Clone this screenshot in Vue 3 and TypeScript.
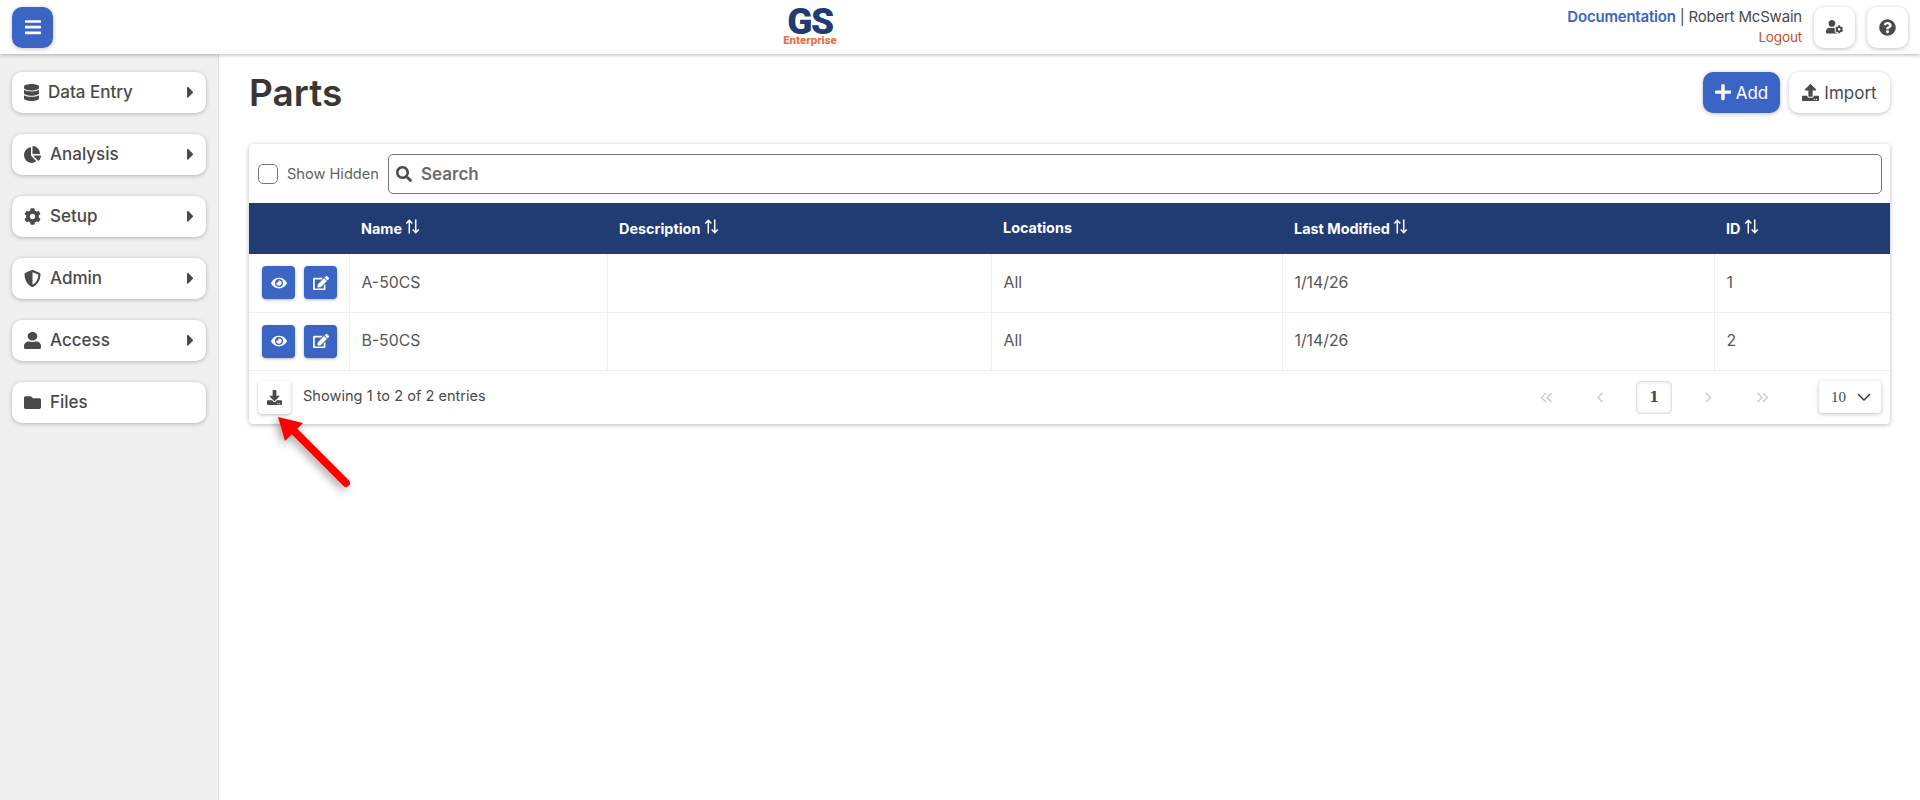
<script setup lang="ts">
const icons: Record<string, [number, string]> = {
  bars: [448, 'M16 132h416c8.837 0 16-7.163 16-16V76c0-8.837-7.163-16-16-16H16C7.163 60 0 67.163 0 76v40c0 8.837 7.163 16 16 16zm0 160h416c8.837 0 16-7.163 16-16v-40c0-8.837-7.163-16-16-16H16c-8.837 0-16 7.163-16 16v40c0 8.837 7.163 16 16 16zm0 160h416c8.837 0 16-7.163 16-16v-40c0-8.837-7.163-16-16-16H16c-8.837 0-16 7.163-16 16v40c0 8.837 7.163 16 16 16z'],
  database: [448, 'M448 73.143v45.714C448 159.143 347.667 192 224 192S0 159.143 0 118.857V73.143C0 32.857 100.333 0 224 0s224 32.857 224 73.143zM448 176v102.857C448 319.143 347.667 352 224 352S0 319.143 0 278.857V176c48.125 33.143 136.208 48.572 224 48.572S399.874 209.143 448 176zm0 160v102.857C448 479.143 347.667 512 224 512S0 479.143 0 438.857V336c48.125 33.143 136.208 48.572 224 48.572S399.874 369.143 448 336z'],
  pie: [544, 'M527.79 288H290.5l158.03 158.03c6.04 6.04 15.98 6.53 22.19.68 38.7-36.46 65.32-85.61 73.13-140.86 1.34-9.46-6.51-17.85-16.06-17.85zm-15.83-64.8C503.72 103.74 408.26 8.28 288.8.04 279.68-.59 272 7.1 272 16.24V240h223.77c9.14 0 16.82-7.68 16.19-16.8zM224 288V50.71c0-9.55-8.39-17.4-17.84-16.06C86.99 51.49-4.1 155.6.14 280.37 4.5 408.51 114.83 513.59 243.03 511.98c50.4-.63 96.97-16.87 135.26-44.03 7.9-5.6 8.42-17.23 1.57-24.08L224 288z'],
  cog: [512, 'M487.4 315.7l-42.6-24.6c4.3-23.2 4.3-47 0-70.2l42.6-24.6c4.9-2.8 7.1-8.6 5.5-14-11.1-35.6-30-67.8-54.7-94.6-3.8-4.1-10-5.1-14.8-2.3L380.8 110c-17.9-15.4-38.5-27.3-60.8-35.1V25.8c0-5.6-3.9-10.5-9.4-11.7-36.7-8.2-74.3-7.8-109.2 0-5.5 1.2-9.4 6.1-9.4 11.7V75c-22.2 7.9-42.8 19.8-60.8 35.1L88.7 85.5c-4.9-2.8-11-1.9-14.8 2.3-24.7 26.7-43.6 58.9-54.7 94.6-1.7 5.4.6 11.2 5.5 14L67.3 221c-4.3 23.2-4.3 47 0 70.2l-42.6 24.6c-4.9 2.8-7.1 8.6-5.5 14 11.1 35.6 30 67.8 54.7 94.6 3.8 4.1 10 5.1 14.8 2.3l42.6-24.6c17.9 15.4 38.5 27.3 60.8 35.1v49.2c0 5.6 3.9 10.5 9.4 11.7 36.7 8.2 74.3 7.8 109.2 0 5.5-1.2 9.4-6.1 9.4-11.7v-49.2c22.2-7.9 42.8-19.8 60.8-35.1l42.6 24.6c4.9 2.8 11 1.9 14.8-2.3 24.7-26.7 43.6-58.9 54.7-94.6 1.5-5.5-.7-11.3-5.6-14.1zM256 336c-44.1 0-80-35.9-80-80s35.9-80 80-80 80 35.9 80 80-35.9 80-80 80z'],
  shield: [512, 'M466.5 83.7l-192-80a48.15 48.15 0 0 0-36.9 0l-192 80C27.7 91.1 16 108.6 16 128c0 198.5 114.5 335.7 221.5 380.3 11.8 4.9 25.1 4.9 36.9 0C360.1 472.6 496 349.3 496 128c0-19.4-11.7-36.9-29.5-44.3zM256.1 446.3l-.1-381 175.9 73.3c-3.3 151.4-82.1 261.1-175.8 307.7z'],
  user: [448, 'M224 256c70.7 0 128-57.3 128-128S294.7 0 224 0 96 57.3 96 128s57.3 128 128 128zm89.6 32h-16.7c-22.2 10.2-46.9 16-72.9 16s-50.6-5.8-72.9-16h-16.7C60.2 288 0 348.2 0 422.4V464c0 26.5 21.5 48 48 48h352c26.5 0 48-21.5 48-48v-41.6c0-74.2-60.2-134.4-134.4-134.4z'],
  folder: [512, 'M464 128H272l-64-64H48C21.49 64 0 85.49 0 112v288c0 26.51 21.49 48 48 48h416c26.51 0 48-21.49 48-48V176c0-26.51-21.49-48-48-48z'],
  caret: [192, 'M0 384.662V127.338c0-17.818 21.543-26.741 34.142-14.142l128.662 128.662c7.81 7.81 7.81 20.474 0 28.284L34.142 398.804C21.543 411.404 0 402.48 0 384.662z'],
  help: [512, 'M504 256c0 136.997-111.043 248-248 248S8 392.997 8 256C8 119.083 119.043 8 256 8s248 111.083 248 248zM262.655 90c-54.497 0-89.255 22.957-116.549 63.758-3.536 5.286-2.353 12.415 2.715 16.258l34.699 26.31c5.205 3.947 12.621 3.008 16.665-2.122 17.864-22.658 30.113-35.797 57.303-35.797 20.429 0 45.698 13.148 45.698 32.958 0 14.976-12.363 22.667-32.534 33.976C247.128 238.528 216 254.941 216 296v4c0 6.627 5.373 12 12 12h56c6.627 0 12-5.373 12-12v-1.333c0-28.462 83.186-29.647 83.186-106.667 0-58.002-60.165-102-116.531-102zM256 338c-25.365 0-46 20.635-46 46 0 25.364 20.635 46 46 46s46-20.636 46-46c0-25.365-20.635-46-46-46z'],
  search: [512, 'M505 442.7L405.3 343c-4.5-4.5-10.6-7-17-7H372c27.6-35.3 44-79.7 44-128C416 93.1 322.9 0 208 0S0 93.1 0 208s93.1 208 208 208c48.3 0 92.7-16.4 128-44v16.3c0 6.4 2.5 12.5 7 17l99.7 99.7c9.4 9.4 24.6 9.4 33.9 0l28.3-28.3c9.4-9.4 9.4-24.6.1-34zM208 336c-70.7 0-128-57.2-128-128 0-70.7 57.2-128 128-128 70.7 0 128 57.2 128 128 0 70.7-57.2 128-128 128z'],
  eye: [576, 'M572.52 241.4C518.29 135.59 410.93 64 288 64S57.68 135.64 3.48 241.41a32.35 32.35 0 0 0 0 29.19C57.71 376.41 165.07 448 288 448s230.32-71.64 284.52-177.41a32.35 32.35 0 0 0 0-29.19zM288 400a144 144 0 1 1 144-144 143.93 143.93 0 0 1-144 144zm0-240a95.31 95.31 0 0 0-25.31 3.79 47.85 47.85 0 0 1-66.9 66.9A95.78 95.78 0 1 0 288 160z'],
  edit: [576, 'M402.6 83.2l90.2 90.2c3.8 3.8 3.8 10 0 13.8L274.4 405.6l-92.8 10.3c-12.4 1.4-22.9-9.1-21.5-21.5l10.3-92.8L388.8 83.2c3.8-3.8 10-3.8 13.8 0zm162-22.9l-48.8-48.8c-15.2-15.2-39.9-15.2-55.2 0l-35.4 35.4c-3.8 3.8-3.8 10 0 13.8l90.2 90.2c3.8 3.8 10 3.8 13.8 0l35.4-35.4c15.2-15.3 15.2-40 0-55.2zM384 346.2V448H64V128h229.8c3.2 0 6.2-1.3 8.5-3.5l40-40c7.6-7.6 2.2-20.5-8.5-20.5H48C21.5 64 0 85.5 0 112v352c0 26.5 21.5 48 48 48h352c26.5 0 48-21.5 48-48V306.2c0-10.7-12.9-16-20.5-8.5l-40 40c-2.2 2.3-3.5 5.3-3.5 8.5z'],
  download: [512, 'M216 0h80c13.3 0 24 10.7 24 24v168h87.7c17.8 0 26.7 21.5 14.1 34.1L269.7 378.3c-7.5 7.5-19.8 7.5-27.3 0L90.1 226.1c-12.6-12.6-3.7-34.1 14.1-34.1H192V24c0-13.3 10.7-24 24-24zm296 376v112c0 13.3-10.7 24-24 24H24c-13.3 0-24-10.7-24-24V376c0-13.3 10.7-24 24-24h146.7l49 49c20.1 20.1 52.5 20.1 72.6 0l49-49H488c13.3 0 24 10.7 24 24zm-124 88c0-11-9-20-20-20s-20 9-20 20 9 20 20 20 20-9 20-20zm64 0c0-11-9-20-20-20s-20 9-20 20 9 20 20 20 20-9 20-20z'],
  upload: [512, 'M296 384h-80c-13.3 0-24-10.7-24-24V192h-87.7c-17.8 0-26.7-21.5-14.1-34.1L242.3 5.7c7.5-7.5 19.8-7.5 27.3 0l152.2 152.2c12.6 12.6 3.7 34.1-14.1 34.1H320v168c0 13.3-10.7 24-24 24zm216-8v112c0 13.3-10.7 24-24 24H24c-13.3 0-24-10.7-24-24V376c0-13.3 10.7-24 24-24h136v8c0 30.9 25.1 56 56 56h80c30.9 0 56-25.1 56-56v-8h136c13.3 0 24 10.7 24 24zm-124 88c0-11-9-20-20-20s-20 9-20 20 9 20 20 20 20-9 20-20zm64 0c0-11-9-20-20-20s-20 9-20 20 9 20 20 20 20-9 20-20z'],
  plus: [448, 'M416 208H272V64c0-17.67-14.33-32-32-32h-32c-17.67 0-32 14.33-32 32v144H32c-17.67 0-32 14.33-32 32v32c0 17.67 14.33 32 32 32h144v144c0 17.67 14.33 32 32 32h32c17.67 0 32-14.33 32-32V304h144c17.67 0 32-14.33 32-32v-32c0-17.67-14.33-32-32-32z'],
  userCog: [640, 'M610.5 373.3c2.6-14.1 2.6-28.5 0-42.6l25.8-14.9c3-1.7 4.3-5.2 3.3-8.5-6.7-21.6-18.2-41.2-33.2-57.4-2.3-2.5-6-3.1-9-1.4l-25.8 14.9c-10.9-9.3-23.4-16.5-36.9-21.3v-29.8c0-3.4-2.4-6.4-5.7-7.1-22.3-5-45-4.8-66.2 0-3.3.7-5.7 3.7-5.7 7.1v29.8c-13.5 4.8-26 12-36.9 21.3l-25.8-14.9c-2.9-1.7-6.7-1.1-9 1.4-15 16.2-26.5 35.8-33.2 57.4-1 3.3.4 6.8 3.3 8.5l25.8 14.9c-2.6 14.1-2.6 28.5 0 42.6l-25.8 14.9c-3 1.7-4.3 5.2-3.3 8.5 6.7 21.6 18.2 41.1 33.2 57.4 2.3 2.5 6 3.1 9 1.4l25.8-14.9c10.9 9.3 23.4 16.5 36.9 21.3v29.8c0 3.4 2.4 6.4 5.7 7.1 22.3 5 45 4.8 66.2 0 3.3-.7 5.7-3.7 5.7-7.1v-29.8c13.5-4.8 26-12 36.9-21.3l25.8 14.9c2.9 1.7 6.7 1.1 9-1.4 15-16.2 26.5-35.8 33.2-57.4 1-3.3-.4-6.8-3.3-8.5l-25.8-14.9zM496 400.5c-26.8 0-48.5-21.8-48.5-48.5s21.8-48.5 48.5-48.5 48.5 21.8 48.5 48.5-21.7 48.5-48.5 48.5zM224 256c70.7 0 128-57.3 128-128S294.7 0 224 0 96 57.3 96 128s57.3 128 128 128zm201.2 226.5c-2.3-1.2-4.6-2.6-6.8-3.9l-7.9 4.6c-6 3.4-12.8 5.3-19.6 5.3-10.9 0-21.4-4.6-28.9-12.6-18.3-19.8-32.3-43.9-40.2-69.6-5.5-17.7 1.9-36.4 17.9-45.7l7.9-4.6c-.1-2.6-.1-5.2 0-7.8l-7.9-4.6c-16-9.2-23.4-28-17.9-45.7.9-2.9 2.2-5.8 3.2-8.7-3.8-.3-7.5-1.2-11.4-1.2h-16.7c-22.2 10.2-46.9 16-72.9 16s-50.6-5.8-72.9-16h-16.7C60.2 288 0 348.2 0 422.4V464c0 26.5 21.5 48 48 48h352c10.1 0 19.5-3.2 27.2-8.5-1.2-3.8-2-7.7-2-11.8v-9.2z'],
}

const menu = [
  { label: 'Data Entry', icon: 'database', width: 15, caret: true },
  { label: 'Analysis', icon: 'pie', width: 17, caret: true },
  { label: 'Setup', icon: 'cog', width: 17, caret: true },
  { label: 'Admin', icon: 'shield', width: 17, caret: true },
  { label: 'Access', icon: 'user', width: 17, caret: true },
  { label: 'Files', icon: 'folder', width: 17, caret: false },
]

const columns = [
  { label: '', width: 100, sort: false },
  { label: 'Name', width: 258, sort: true },
  { label: 'Description', width: 384, sort: true },
  { label: 'Locations', width: 291, sort: false },
  { label: 'Last Modified', width: 432, sort: true },
  { label: 'ID', width: 176, sort: true },
]

const rows = [
  { name: 'A-50CS', description: '', locations: 'All', modified: '1/14/26', id: 1 },
  { name: 'B-50CS', description: '', locations: 'All', modified: '1/14/26', id: 2 },
]

const chevrons = {
  first: 'M6 1 1.5 5.5 6 10M11.5 1 7 5.5l4.5 4.5',
  prev: 'M8.5 1 4 5.5 8.5 10',
  next: 'M4 1l4.5 4.5L4 10',
  last: 'M1.5 1 6 5.5 1.5 10M7 1l4.5 4.5L7 10',
}
</script>

<template>
  <div class="page">
    <header class="topbar">
      <button class="square primary">
        <svg class="ic w16" :viewBox="`0 0 ${icons.bars[0]} 512`"><path :d="icons.bars[1]" /></svg>
      </button>
      <div class="logo">
        <span class="logo-gs">GS</span>
        <span class="logo-sub">Enterprise</span>
      </div>
      <div class="top-right">
        <div class="user-info">
          <div><a class="doc">Documentation</a> | Robert McSwain</div>
          <a class="logout">Logout</a>
        </div>
        <button class="square">
          <svg class="ic w17" :viewBox="`0 0 ${icons.userCog[0]} 512`"><path :d="icons.userCog[1]" /></svg>
        </button>
        <button class="square">
          <svg class="ic w17" :viewBox="`0 0 ${icons.help[0]} 512`"><path :d="icons.help[1]" /></svg>
        </button>
      </div>
    </header>

    <div class="body">
      <aside class="sidebar">
        <div v-for="item in menu" :key="item.label" class="menu-item">
          <svg
            class="ic menu-icon"
            :style="{ width: item.width + 'px' }"
            :viewBox="`0 0 ${icons[item.icon][0]} 512`"
            preserveAspectRatio="none"
          ><path :d="icons[item.icon][1]" /></svg>
          <span class="menu-label">{{ item.label }}</span>
          <svg v-if="item.caret" class="ic menu-caret" :viewBox="`0 0 ${icons.caret[0]} 512`"><path :d="icons.caret[1]" /></svg>
        </div>
      </aside>

      <main class="main">
        <div class="title-row">
          <h1>Parts</h1>
          <div class="actions">
            <button class="btn btn-add">
              <svg class="ic w16" :viewBox="`0 0 ${icons.plus[0]} 512`"><path :d="icons.plus[1]" /></svg>
              Add
            </button>
            <button class="btn btn-import">
              <svg class="ic w17" :viewBox="`0 0 ${icons.upload[0]} 512`"><path :d="icons.upload[1]" /></svg>
              Import
            </button>
          </div>
        </div>

        <section class="card">
          <div class="toolbar">
            <span class="check"></span>
            <span class="show-hidden">Show Hidden</span>
            <div class="search">
              <svg class="ic search-icon" :viewBox="`0 0 ${icons.search[0]} 512`"><path :d="icons.search[1]" /></svg>
              <span>Search</span>
            </div>
          </div>

          <table>
            <colgroup>
              <col v-for="c in columns" :key="c.label" :style="{ width: c.width + 'px' }" />
            </colgroup>
            <thead>
              <tr>
                <th v-for="c in columns" :key="c.label">
                  {{ c.label }}
                  <svg v-if="c.sort" class="sort" viewBox="0 0 14 14" fill="none" stroke="#fff" stroke-width="1.4">
                    <path d="M4 13.5V1.5M1.2 4.2 4 1.2l2.8 3M10 .5v12M7.2 9.8l2.8 3 2.8-3" />
                  </svg>
                </th>
              </tr>
            </thead>
            <tbody>
              <tr v-for="row in rows" :key="row.id">
                <td class="row-actions">
                  <button class="mini">
                    <svg class="ic w16" :viewBox="`0 0 ${icons.eye[0]} 512`"><path :d="icons.eye[1]" /></svg>
                  </button>
                  <button class="mini">
                    <svg class="ic w16" :viewBox="`0 0 ${icons.edit[0]} 512`"><path :d="icons.edit[1]" /></svg>
                  </button>
                </td>
                <td>{{ row.name }}</td>
                <td>{{ row.description }}</td>
                <td>{{ row.locations }}</td>
                <td>{{ row.modified }}</td>
                <td>{{ row.id }}</td>
              </tr>
            </tbody>
          </table>

          <div class="footer">
            <button class="download">
              <svg class="ic w15" :viewBox="`0 0 ${icons.download[0]} 512`"><path :d="icons.download[1]" /></svg>
            </button>
            <span class="entries">Showing 1 to 2 of 2 entries</span>
            <div class="pager">
              <span class="pg"><svg viewBox="0 0 13 11"><path :d="chevrons.first" /></svg></span>
              <span class="pg"><svg viewBox="0 0 13 11"><path :d="chevrons.prev" /></svg></span>
              <span class="pg current">1</span>
              <span class="pg"><svg viewBox="0 0 13 11"><path :d="chevrons.next" /></svg></span>
              <span class="pg"><svg viewBox="0 0 13 11"><path :d="chevrons.last" /></svg></span>
            </div>
            <div class="page-size">
              <span>10</span>
              <svg viewBox="0 0 14 8" fill="none" stroke="#333" stroke-width="1.4"><path d="M1 1l6 6 6-6" /></svg>
            </div>
          </div>
        </section>
      </main>
    </div>

    <svg class="arrow" width="100" height="90" viewBox="0 0 100 90">
      <defs>
        <filter id="arrow-shadow" x="-30%" y="-30%" width="160%" height="160%">
          <feDropShadow dx="-3" dy="3" stdDeviation="4" flood-color="#000" flood-opacity="0.35" />
        </filter>
      </defs>
      <g filter="url(#arrow-shadow)">
        <path d="M76 74 21 19" stroke="#f00" stroke-width="8" stroke-linecap="round" />
        <path d="M8 8 33 14 15 32Z" fill="#f00" />
      </g>
    </svg>
  </div>
</template>

<style>
html, body {
  margin: 0;
  background: #fff;
}
</style>

<style scoped>
.page {
  position: relative;
  width: 1920px;
  height: 800px;
  overflow: hidden;
  font-family: Inter, "Liberation Sans", sans-serif;
  font-size: 14.6px;
  color: #4a4a4a;
}

.ic {
  fill: currentColor;
  display: block;
  flex: none;
}
.w15 { width: 15px; }
.w16 { width: 16px; }
.w17 { width: 17px; }

button {
  font-family: inherit;
  border: none;
  cursor: pointer;
  padding: 0;
}

.topbar {
  position: relative;
  z-index: 2;
  height: 54px;
  background: #fff;
  box-shadow: 0 1px 4px rgba(0, 0, 0, 0.28);
  display: flex;
  align-items: center;
  padding: 0 12px;
}

.square {
  width: 41px;
  height: 41px;
  border-radius: 10px;
  background: #fff;
  color: #4a4a4a;
  box-shadow: 0 1px 4px rgba(0, 0, 0, 0.25);
  display: flex;
  align-items: center;
  justify-content: center;
}
.square.primary {
  background: #3a65c4;
  color: #fff;
}

.logo {
  position: absolute;
  left: 783px;
  top: 8px;
  width: 54px;
  display: flex;
  flex-direction: column;
  align-items: center;
}
.logo-gs {
  font-family: Roboto, "Liberation Sans", sans-serif;
  font-weight: 900;
  font-size: 37px;
  line-height: 27px;
  letter-spacing: -1.5px;
  color: #213b73;
}
.logo-sub {
  font-family: Roboto, "Liberation Sans", sans-serif;
  font-weight: 900;
  font-size: 11.5px;
  line-height: 10px;
  color: #e8734a;
}

.top-right {
  margin-left: auto;
  display: flex;
  align-items: center;
  gap: 12px;
}
.user-info {
  text-align: right;
  line-height: 20px;
  font-size: 15px;
  letter-spacing: -0.2px;
}
.doc {
  color: #3a65c4;
  font-weight: 600;
}
.logout {
  color: #c0532e;
  font-size: 13.6px;
}

.body {
  display: flex;
  height: 746px;
}

.sidebar {
  flex: none;
  background: #f0f0f0;
  border-right: 1px solid #dedede;
  padding: 18px 12px 0;
  box-sizing: border-box;
  width: 219px;
  display: flex;
  flex-direction: column;
  gap: 21px;
}
.menu-item {
  height: 41px;
  background: #fff;
  border-radius: 10px;
  box-shadow: 0 1px 4px rgba(0, 0, 0, 0.25);
  display: flex;
  align-items: center;
  padding: 0 12px;
}
.menu-icon {
  height: 17px;
}
.menu-label {
  margin-left: 9px;
  padding-bottom: 2px;
  font-size: 17px;
  font-weight: 500;
  color: #4a4a4a;
}
.menu-caret {
  margin-left: auto;
  width: 7px;
}

.main {
  flex: 1;
  padding: 0 30px;
  min-width: 0;
}

.title-row {
  display: flex;
  align-items: flex-start;
  justify-content: space-between;
  height: 90px;
}
h1 {
  margin: 14px 0 0;
  font-size: 37px;
  line-height: 50px;
  font-weight: 600;
  color: #3a3636;
}
.actions {
  display: flex;
  gap: 9px;
  padding-top: 18px;
}
.btn {
  height: 41px;
  border-radius: 10px;
  display: flex;
  align-items: center;
  justify-content: center;
  gap: 5px;
  font-size: 17px;
  box-shadow: 0 1px 4px rgba(0, 0, 0, 0.25);
}
.btn-add {
  width: 77px;
  background: #3a65c4;
  color: #fff;
}
.btn-import {
  width: 101px;
  background: #fff;
  color: #4a4a4a;
}

.card {
  width: 1641px;
  height: 280px;
  background: #fff;
  border-radius: 4px;
  box-shadow: 0 1px 4px rgba(0, 0, 0, 0.28);
}

.toolbar {
  height: 59px;
  display: flex;
  align-items: center;
  padding: 0 8px 0 9px;
  box-sizing: border-box;
}
.check {
  width: 18px;
  height: 18px;
  border: 1px solid #777;
  border-radius: 5px;
  margin-right: 9px;
}
.show-hidden {
  width: 92px;
  color: #5f5f5f;
  margin-right: 9px;
  white-space: nowrap;
}
.search {
  flex: 1;
  height: 38px;
  border: 1px solid #777;
  border-radius: 5px;
  display: flex;
  align-items: center;
  padding-left: 7px;
  gap: 9px;
  font-size: 17px;
  font-weight: 600;
  color: #6b6b6b;
}
.search-icon {
  width: 16px;
  color: #4a4a4a;
}

table {
  width: 100%;
  table-layout: fixed;
  border-collapse: collapse;
}
th {
  height: 51px;
  padding: 0 12px 2px;
  box-sizing: border-box;
  background: #213b73;
  color: #fff;
  font-size: 14.4px;
  font-weight: 700;
  text-align: left;
}
.sort {
  display: inline-block;
  width: 15px;
  height: 15px;
  vertical-align: 0;
}
td {
  height: 58px;
  padding: 0 12px 1px;
  border: 1px solid #efefef;
  border-top: none;
  box-sizing: border-box;
  font-size: 15.8px;
  color: #555;
}
td:first-child {
  border-left: none;
}
td:last-child {
  border-right: none;
}
.row-actions {
  padding: 0 0 0 13px;
}
.mini {
  width: 33px;
  height: 33px;
  border-radius: 4px;
  margin-right: 9px;
  background: #3a65c4;
  color: #fff;
  box-shadow: 0 1px 3px rgba(0, 0, 0, 0.3);
  vertical-align: middle;
}
.mini .ic {
  margin: 0 auto;
}

.footer {
  height: 53px;
  display: flex;
  align-items: center;
  padding: 0 9px;
}
.download {
  width: 33px;
  height: 33px;
  border-radius: 4px;
  background: #fff;
  color: #4a4a4a;
  box-shadow: 0 1px 3px rgba(0, 0, 0, 0.25);
  display: flex;
  align-items: center;
  justify-content: center;
}
.entries {
  margin-left: 12px;
  padding-bottom: 2px;
}
.pager {
  margin-left: auto;
  margin-right: 30px;
  display: flex;
  align-items: center;
}
.pg {
  width: 36px;
  height: 33px;
  margin: 0 9px;
  display: flex;
  align-items: center;
  justify-content: center;
}
.pg svg {
  width: 13px;
  height: 11px;
  fill: none;
  stroke: #c8c8c8;
  stroke-width: 1.3;
}
.pg.current {
  box-sizing: border-box;
  border: 1px solid #e2e2e2;
  border-radius: 4px;
  box-shadow: inset 0 0 4px rgba(0, 0, 0, 0.12);
  font-family: "DejaVu Serif", serif;
  font-size: 14px;
  font-weight: 700;
  color: #4a4a4a;
}
.page-size {
  width: 62px;
  height: 32px;
  border-radius: 4px;
  background: #fff;
  box-shadow: 0 1px 4px rgba(0, 0, 0, 0.25);
  display: flex;
  align-items: center;
  justify-content: space-between;
  padding: 0 10px 0 12px;
  box-sizing: border-box;
  font-family: "Liberation Serif", serif;
  font-size: 15px;
  color: #3c4858;
}
.page-size svg {
  width: 14px;
  height: 8px;
}

.arrow {
  position: absolute;
  left: 270px;
  top: 409px;
  overflow: visible;
}
</style>
